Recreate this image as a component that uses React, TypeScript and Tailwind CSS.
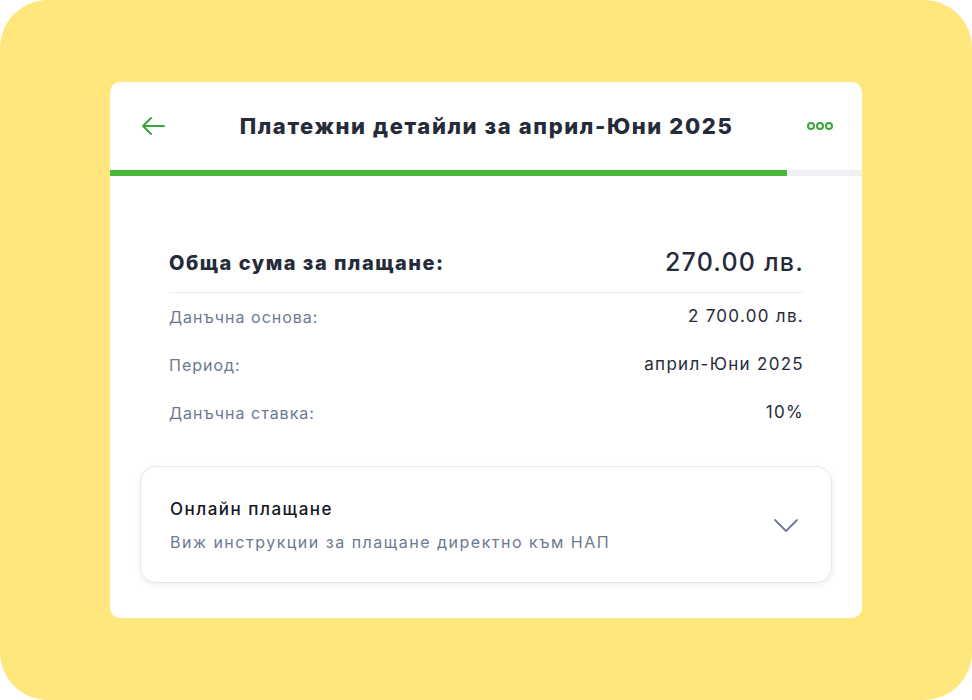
import React from "react";

const rows: [string, string][] = [
  ["Данъчна основа:", "2 700.00 лв."],
  ["Период:", "април-Юни 2025"],
  ["Данъчна ставка:", "10%"],
];

export default function App() {
  return (
    <div className="w-[972px] h-[700px] bg-white font-['Inter','Noto_Sans',sans-serif]" lang="bg">
      <div className="w-[972px] h-[700px] bg-[#ffe77d] rounded-[48px] pt-[82px] px-[110px]">
        <div className="bg-white rounded-[10px] h-[536px] overflow-hidden">
          <div className="h-[88px] flex items-center justify-between px-[30px]">
            <svg width="26" height="20" viewBox="0 0 26 20" fill="none" stroke="#3aa53a" strokeWidth="2" strokeLinecap="round" strokeLinejoin="round">
              <path d="M24 10H3M11 2L3 10l8 8" />
            </svg>
            <div className="text-[22px] font-extrabold text-[#262b3a] tracking-[1.6px]">Платежни детайли за април-Юни 2025</div>
            <div className="flex gap-[1px] mr-[-1px]">
              {[0, 1, 2].map((i) => (
                <div key={i} className="w-[8px] h-[8px] rounded-full border-[2px] border-[#3aa53a]" />
              ))}
            </div>
          </div>
          <div className="h-[6px] bg-[#eef0f4] flex">
            <div className="w-[677px] h-full bg-[#4cb83a]" />
          </div>
          <div className="px-[59px] pt-[66px]">
            <div className="flex items-start justify-between h-[51px] border-b border-[#eceef2]">
              <div className="h-[42px] flex items-center">
                <span className="text-[20px] font-extrabold text-[#262b3a] tracking-[1.5px]">Обща сума за плащане:</span>
              </div>
              <div className="h-[42px] flex items-center mr-[-1px]">
                <span className="text-[25px] font-medium text-[#262b3a] tracking-[1.2px]">270.00 лв.</span>
              </div>
            </div>
            <div className="flex flex-col">
              {rows.map(([l, v]) => (
                <div key={l} className="flex items-center justify-between h-[48px]">
                  <span className="text-[16px] text-[#6e7a8e] tracking-[1px]">{l}</span>
                  <span className="text-[17px] text-[#262b3a] tracking-[1.3px] mr-[-1px]">{v}</span>
                </div>
              ))}
            </div>
          </div>
          <div className="px-[30px] mt-[29px]">
            <div className="h-[117px] rounded-[16px] border border-[#e3e7ee] shadow-[0_2px_6px_rgba(30,40,70,0.08)] flex items-center justify-between pl-[29px] pr-[32px]">
              <div className="flex flex-col gap-[7px] pt-[2px]">
                <span className="text-[17px] font-medium text-[#14171f] tracking-[1.5px]">Онлайн плащане</span>
                <span className="text-[16px] text-[#6e7a8e] tracking-[1.5px]">Виж инструкции за плащане директно към НАП</span>
              </div>
              <svg width="26" height="16" viewBox="0 0 26 16" fill="none" stroke="#6e7a8e" strokeWidth="1.8" strokeLinecap="round" strokeLinejoin="round">
                <path d="M2 3l11 11L24 3" />
              </svg>
            </div>
          </div>
        </div>
      </div>
    </div>
  );
}
